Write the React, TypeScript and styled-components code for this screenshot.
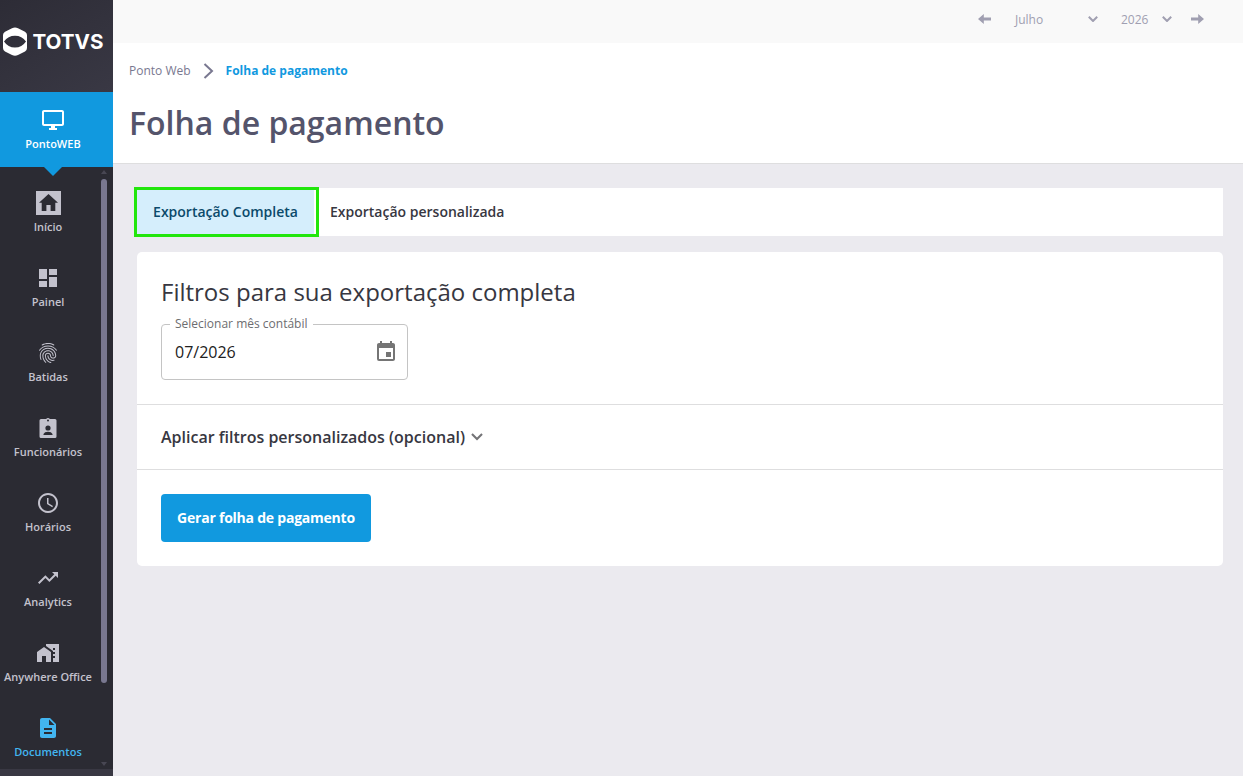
import React from "react";
import styled, { createGlobalStyle } from "styled-components";
import {
  MdDashboard,
  MdFingerprint,
  MdSchedule,
  MdTrendingUp,
  MdHomeWork,
  MdDescription,
  MdEvent,
} from "react-icons/md";

const Global = createGlobalStyle`
  *, *::before, *::after { box-sizing: border-box; }
  body { margin: 0; background: #ebeaef; font-family: "Open Sans", "Noto Sans", sans-serif; }
  h1, h2, p { margin: 0; }
  button { font-family: inherit; border: 0; background: none; padding: 0; }
  svg { display: block; flex: none; }
`;

const Shell = styled.div`
  display: flex;
  width: 100%;
  height: 776px;
  overflow: hidden;
`;

const Sidebar = styled.aside`
  width: 113px;
  flex: none;
  display: flex;
  flex-direction: column;
  background: #2b2b33;
`;

const Brand = styled.div`
  height: 92px;
  flex: none;
  display: flex;
  align-items: center;
  padding: 0 0 9px 3px;
  background: linear-gradient(150deg, #2d2c36, #393844);
`;

const Module = styled.div`
  position: relative;
  height: 75px;
  flex: none;
  display: flex;
  flex-direction: column;
  align-items: center;
  padding: 16px 7px 0 0;
  background: #1199df;
  color: #fff;
  font-size: 11px;
  line-height: 16px;
  font-weight: 600;
  gap: 4px;

  &::after {
    content: "";
    position: absolute;
    top: 75px;
    left: 44px;
    border: 9px solid transparent;
    border-top-color: #1199df;
    border-bottom: 0;
  }
`;

const NavArea = styled.div`
  height: 602px;
  display: flex;
`;

const NavList = styled.nav`
  width: 96px;
  padding-top: 24px;
  flex: none;
`;

const NavItem = styled.div<{ $active?: boolean }>`
  height: 75px;
  display: flex;
  flex-direction: column;
  align-items: center;
  gap: 4px;
  white-space: nowrap;
  font-size: 11px;
  line-height: 16px;
  font-weight: 600;
  color: ${(p) => (p.$active ? "#42b5f0" : "#c3c2cd")};
`;

const Scrollbar = styled.div`
  margin-left: 5px;
  padding: 3px 0;
  width: 6px;
  display: flex;
  flex-direction: column;
  align-items: center;
`;

const ScrollThumb = styled.div`
  width: 6px;
  height: 504px;
  margin: 5px 0 auto;
  border-radius: 3px;
  background: #797890;
`;

const ScrollArrow = styled.div<{ $down?: boolean }>`
  border: 3px solid transparent;
  ${(p) => (p.$down ? "border-top: 4px solid #484753; border-bottom: 0;" : "border-bottom: 4px solid #484753; border-top: 0;")}
`;

const SidebarFoot = styled.div`
  flex: 1;
  background: #393843;
`;

const Main = styled.main`
  flex: 1;
  min-width: 0;
`;

const TopBar = styled.div`
  height: 43px;
  display: flex;
  align-items: center;
  justify-content: flex-end;
  padding: 0 39px 5px 0;
  background: #f9f9f9;
  color: #a09fb1;
  font-size: 12px;
`;

const PeriodField = styled.div<{ $width: number; $gap: number }>`
  display: flex;
  align-items: center;
  justify-content: space-between;
  width: ${(p) => p.$width}px;
  margin-left: ${(p) => p.$gap}px;
`;

const NextArrow = styled.div`
  margin-left: 19px;
`;

const PageHead = styled.header`
  height: 121px;
  padding: 17px 16px 0;
  background: #fff;
  border-bottom: 1px solid #dededf;
`;

const Crumbs = styled.div`
  display: flex;
  align-items: center;
  height: 20px;
  font-size: 12px;
  color: #797890;
  svg { margin: 1px 12px 0 12px; }
`;

const CurrentCrumb = styled.span`
  font-weight: 700;
  color: #1199df;
`;

const Title = styled.h1`
  margin-top: 21px;
  font-size: 32px;
  line-height: 44px;
  font-weight: 600;
  color: #54546b;
`;

const Content = styled.section`
  padding: 24px 20px 0 24px;
`;

const Tabs = styled.div`
  display: flex;
  height: 48px;
  background: #fff;
`;

const Tab = styled.button<{ $active?: boolean }>`
  position: relative;
  z-index: ${(p) => (p.$active ? 1 : 0)};
  padding: 0 16px 2px;
  width: ${(p) => (p.$active ? "177px" : "auto")};
  font-size: 14px;
  font-weight: 600;
  color: ${(p) => (p.$active ? "#0b4a6b" : "#373741")};
  background: ${(p) => (p.$active ? "#d5eefc" : "#fff")};
`;

const Highlight = styled.span`
  position: absolute;
  inset: -1px -5px -1px -3px;
  border: 3px solid #22e60c;
`;

const Card = styled.div`
  margin-top: 16px;
  height: 314px;
  background: #fff;
  border-radius: 5px;
`;

const Filters = styled.div`
  height: 153px;
  padding: 24px 24px 0;
  border-bottom: 1px solid #dededf;
`;

const SectionTitle = styled.h2`
  font-size: 24px;
  line-height: 32px;
  font-weight: 400;
  color: #373741;
`;

const MonthField = styled.fieldset`
  width: 247px;
  height: 64px;
  margin: 8px 0 0;
  padding: 0 9px 0 13px;
  border: 1px solid #c4c4c4;
  border-radius: 4px;
`;

const FieldLegend = styled.legend`
  margin-left: -5px;
  padding: 0 5px;
  height: 16px;
  font-size: 12px;
  line-height: 16px;
  color: #6d6d70;
`;

const FieldValue = styled.div`
  height: 39px;
  display: flex;
  align-items: center;
  justify-content: space-between;
  font-size: 16px;
  color: #212121;
  svg { color: #757575; }
`;

const Optional = styled.div`
  height: 65px;
  display: flex;
  align-items: center;
  gap: 6px;
  padding: 0 24px;
  border-bottom: 1px solid #dededf;
  font-size: 16px;
  font-weight: 600;
  color: #373741;
  svg { color: #747477; }
`;

const Actions = styled.div`
  padding: 24px;
`;

const PrimaryButton = styled.button`
  width: 210px;
  height: 48px;
  padding-bottom: 2px;
  border-radius: 4px;
  background: #1199df;
  color: #fff;
  font-size: 14px;
  font-weight: 700;
  letter-spacing: -0.23px;
`;

const BrandLogo = () => (
  <svg width="102" height="30" viewBox="0 0 102 30">
    <path
      fill="#fff"
      fillRule="evenodd"
      d="M12 0.5 Q13.5 0.5 15 1.2 L22 4.8 Q24 6 24 8 V21 Q24 23.2 22 24.5 L15 28 Q12 29.4 9 28 L2 24.5 Q0 23.2 0 21 V8 Q0 6 2 4.8 L9 1.2 Q10.5 .5 12 .5 Z M1 14.5 Q5 20.5 12 20.5 Q19 20.5 23 14.5 Q19 8.8 12 8.8 Q5 8.8 1 14.5 Z"
    />
    <text
      x="29.5"
      y="21.8"
      fill="#fff"
      fontFamily="Inter, sans-serif"
      fontWeight="700"
      fontSize="20.5"
      textLength="71"
      lengthAdjust="spacingAndGlyphs"
    >
      TOTVS
    </text>
  </svg>
);

const MonitorIcon = () => (
  <svg width="24" height="24" viewBox="0 0 24 24" fill="currentColor">
    <path d="M21 2H3c-1.1 0-2 .9-2 2v12c0 1.1.9 2 2 2h7v2H8v2h8v-2h-2v-2h7c1.1 0 2-.9 2-2V4c0-1.1-.9-2-2-2zm0 14H3V4h18v12z" />
  </svg>
);

const HomeIcon = () => (
  <svg width="25" height="24" viewBox="0 0 25 24" fill="currentColor">
    <path fillRule="evenodd" d="M0 0H25V24H0Z M12.5 3L3 11.8H5.7V20H10.4V14H14.6V20H19.3V11.8H22Z" />
  </svg>
);

const BadgeIcon = () => (
  <svg width="24" height="24" viewBox="0 0 24 24" fill="currentColor">
    <path
      fillRule="evenodd"
      d="M5 3H10.2Q10.7 2 12 2T13.8 3H19Q20.5 3 20.5 4.5V20.5Q20.5 22 19 22H5Q3.5 22 3.5 20.5V4.5Q3.5 3 5 3Z M12 3.6A1 1 0 1 0 12 5.6A1 1 0 1 0 12 3.6Z M12 9.4A2.6 2.6 0 1 0 12 14.6A2.6 2.6 0 1 0 12 9.4Z M7.5 19H16.5V18Q15.5 15.8 12 15.8T7.5 18Z"
    />
  </svg>
);

const Chevron = ({ size = 10, stroke = 2 }: { size?: number; stroke?: number }) => (
  <svg width={size} height={size * 0.6} viewBox="0 0 10 6" fill="none" stroke="currentColor" strokeWidth={stroke}>
    <path d="M.8 .8L5 5L9.2 .8" />
  </svg>
);

const CrumbChevron = () => (
  <svg width="11" height="16" viewBox="0 0 11 16" fill="none" stroke="currentColor" strokeWidth="2">
    <path d="M1.5 1L9 8L1.5 15" />
  </svg>
);

const PeriodArrow = ({ right }: { right?: boolean }) => (
  <svg width="13" height="10" viewBox="0 0 13 10" fill="currentColor">
    <path d={right ? "M13 5L7.2 0V3.4H0V6.6H7.2V10Z" : "M0 5L5.8 0V3.4H13V6.6H5.8V10Z"} />
  </svg>
);

const navItems = [
  { label: "Início", icon: <HomeIcon /> },
  { label: "Painel", icon: <MdDashboard size={24} /> },
  { label: "Batidas", icon: <MdFingerprint size={24} /> },
  { label: "Funcionários", icon: <BadgeIcon /> },
  { label: "Horários", icon: <MdSchedule size={24} /> },
  { label: "Analytics", icon: <MdTrendingUp size={24} /> },
  { label: "Anywhere Office", icon: <MdHomeWork size={24} /> },
  { label: "Documentos", icon: <MdDescription size={24} />, active: true },
];

export default function App() {
  return (
    <>
      <Global />
      <Shell>
        <Sidebar>
          <Brand>
            <BrandLogo />
          </Brand>
          <Module>
            <MonitorIcon />
            PontoWEB
          </Module>
          <NavArea>
            <NavList>
              {navItems.map((item) => (
                <NavItem key={item.label} $active={item.active}>
                  {item.icon}
                  {item.label}
                </NavItem>
              ))}
            </NavList>
            <Scrollbar>
              <ScrollArrow />
              <ScrollThumb />
              <ScrollArrow $down />
            </Scrollbar>
          </NavArea>
          <SidebarFoot />
        </Sidebar>
        <Main>
          <TopBar>
            <PeriodArrow />
            <PeriodField $width={83} $gap={24}>
              Julho
              <Chevron />
            </PeriodField>
            <PeriodField $width={51} $gap={23}>
              2026
              <Chevron />
            </PeriodField>
            <NextArrow>
              <PeriodArrow right />
            </NextArrow>
          </TopBar>
          <PageHead>
            <Crumbs>
              Ponto Web
              <CrumbChevron />
              <CurrentCrumb>Folha de pagamento</CurrentCrumb>
            </Crumbs>
            <Title>Folha de pagamento</Title>
          </PageHead>
          <Content>
            <Tabs>
              <Tab $active>
                Exportação Completa
                <Highlight />
              </Tab>
              <Tab>Exportação personalizada</Tab>
            </Tabs>
            <Card>
              <Filters>
                <SectionTitle>Filtros para sua exportação completa</SectionTitle>
                <MonthField>
                  <FieldLegend>Selecionar mês contábil</FieldLegend>
                  <FieldValue>
                    07/2026
                    <MdEvent size={24} />
                  </FieldValue>
                </MonthField>
              </Filters>
              <Optional>
                Aplicar filtros personalizados (opcional)
                <Chevron size={12} stroke={1.7} />
              </Optional>
              <Actions>
                <PrimaryButton>Gerar folha de pagamento</PrimaryButton>
              </Actions>
            </Card>
          </Content>
        </Main>
      </Shell>
    </>
  );
}
